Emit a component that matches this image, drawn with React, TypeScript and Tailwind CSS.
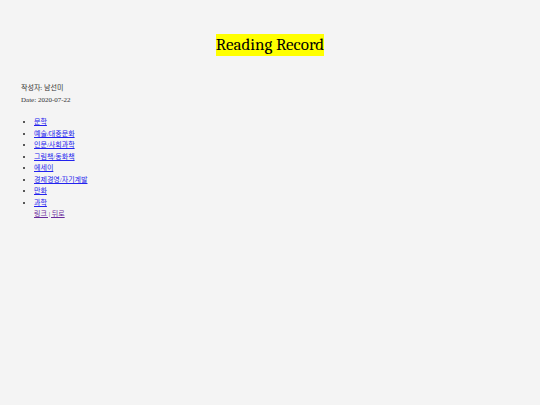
const categories = [
  '문학',
  '예술/대중문화',
  '인문/사회과학',
  '그림책/동화책',
  '에세이',
  '경제경영/자기계발',
  '만화',
  '과학',
]

export default function App() {
  return (
    <div className="min-h-[405px] bg-[#f4f4f4] text-[#222] font-['Liberation_Serif','Noto_Sans_CJK_KR',serif]">
      {/* Title */}
      <div className="pt-[34px] flex justify-center">
        <h1 className="bg-[#ffff00] text-black text-[17px] leading-[22px] font-normal font-serif">
          Reading Record
        </h1>
      </div>

      {/* Meta */}
      <div className="mt-[26px] pl-[21px] text-[7px] leading-[12px] text-[#333]">
        <p>작성자: 남선미</p>
        <p>Date: 2020-07-22</p>
      </div>

      {/* Category list */}
      <div className="mt-[11px] pl-[34px] text-[7px] leading-[11.5px]">
        <ul className="list-disc">
          {categories.map((c) => (
            <li key={c}>
              <a href="#" className="text-[#2222ee] underline">
                {c}
              </a>
            </li>
          ))}
        </ul>
        <a href="#" className="text-[#6a2a9b] underline">
          링크 | 뒤로
        </a>
      </div>
    </div>
  )
}
